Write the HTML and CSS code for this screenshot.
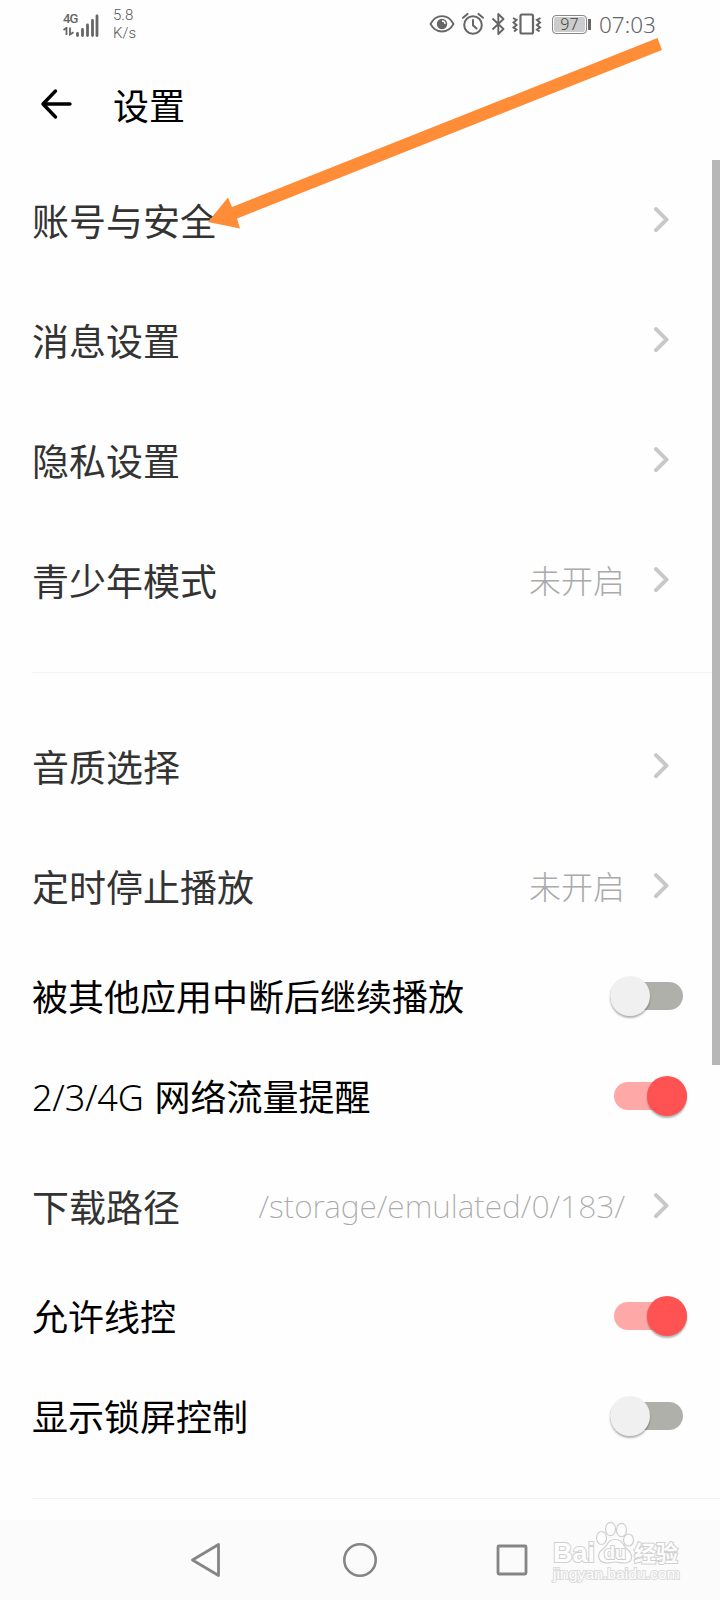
FILE: index.html
```html
<!DOCTYPE html>
<html lang="zh-CN">
<head>
  <meta charset="UTF-8">
  <title>设置</title>
  <link rel="stylesheet" href="styles.css">
</head>
<body>
  <svg class="defs" width="0" height="0">
    <symbol id="chevron" viewBox="0 0 16 28">
      <path d="M3 3.2 L13.5 13.7 L3 24.2" fill="none" stroke="#c8c8c8" stroke-width="4" stroke-linecap="round" stroke-linejoin="round"/>
    </symbol>
  </svg>

  <div class="status-bar">
    <div class="network">
      <span class="network-type">4G</span>
      <svg class="data-icon" width="12" height="9" viewBox="0 0 12 9">
        <path d="M0.5 3 L3.5 0.8 V8 M7 0.5 V7.5 L10.5 5.2" fill="none" stroke="#666" stroke-width="1.8"/>
      </svg>
    </div>
    <svg class="signal" width="24" height="24" viewBox="0 0 24 24">
      <path d="M2.5 20.5 V22.5 M7.5 16.5 V22.5 M12.5 12 V22.5 M17.5 7.5 V22.5 M22 3 V22.5" stroke="#666" stroke-width="2.8" stroke-linecap="round"/>
    </svg>
    <div class="speed"><span>5.8</span><span>K/s</span></div>
    <div class="status-icons">
      <svg width="26" height="20" viewBox="0 0 26 20">
        <path d="M1.5 10 C7 -0.5 19 -0.5 24.5 10 C19 20 7 20 1.5 10 Z" fill="none" stroke="#666" stroke-width="1.8"/>
        <circle cx="13" cy="10" r="5.2" fill="#666"/>
        <path d="M13 7 A3 3 0 0 1 16 10" fill="none" stroke="#fff" stroke-width="1.3"/>
      </svg>
      <svg class="alarm" width="22" height="24" viewBox="0 0 22 24">
        <circle cx="11" cy="13" r="8.8" fill="none" stroke="#666" stroke-width="2"/>
        <path d="M11 8 V13.3 L14.5 16.5 M1 5.8 L5.5 2 M21 5.8 L16.5 2" fill="none" stroke="#666" stroke-width="2" stroke-linecap="round"/>
      </svg>
      <svg class="bluetooth" width="14" height="24" viewBox="0 0 14 24">
        <path d="M1.5 6.5 L12.5 17 L7.3 22 V2 L12.5 7 L1.5 17.5" fill="none" stroke="#666" stroke-width="1.9" stroke-linejoin="round"/>
      </svg>
      <svg class="vibrate" width="30" height="24" viewBox="0 0 30 24">
        <rect x="8.5" y="2.5" width="12.5" height="19" rx="1.5" fill="none" stroke="#666" stroke-width="2.2"/>
        <path d="M1 6 L4.5 8 L1.5 10.5 L4.5 13 L1.5 15.5 L4.5 17.5 L2 19.5 M28.5 6 L25 8 L28 10.5 L25 13 L28 15.5 L25 17.5 L27.5 19.5" fill="none" stroke="#666" stroke-width="2"/>
      </svg>
      <div class="battery">97</div>
      <span class="clock">07:03</span>
    </div>
  </div>

  <div class="header">
    <svg width="32" height="32" viewBox="0 0 32 32">
      <path d="M15.5 3 L3 16 L15.5 29 M3 16 H30" fill="none" stroke="#000" stroke-width="3.4" stroke-linecap="round" stroke-linejoin="round"/>
    </svg>
    <h1>设置</h1>
  </div>

  <div class="settings">
    <div class="group">
      <div class="row">
        <span class="label">账号与安全</span>
        <svg class="chevron"><use href="#chevron"/></svg>
      </div>
      <div class="row">
        <span class="label">消息设置</span>
        <svg class="chevron"><use href="#chevron"/></svg>
      </div>
      <div class="row">
        <span class="label">隐私设置</span>
        <svg class="chevron"><use href="#chevron"/></svg>
      </div>
      <div class="row">
        <span class="label">青少年模式</span>
        <span class="value">未开启</span>
        <svg class="chevron"><use href="#chevron"/></svg>
      </div>
    </div>
    <div class="group">
      <div class="row">
        <span class="label">音质选择</span>
        <svg class="chevron"><use href="#chevron"/></svg>
      </div>
      <div class="row">
        <span class="label">定时停止播放</span>
        <span class="value">未开启</span>
        <svg class="chevron"><use href="#chevron"/></svg>
      </div>
      <div class="row switch-row">
        <span class="label">被其他应用中断后继续播放</span>
        <div class="switch"><div class="knob"></div></div>
      </div>
      <div class="row switch-row">
        <span class="label"><span class="latin">2/3/4G</span>网络流量提醒</span>
        <div class="switch on"><div class="knob"></div></div>
      </div>
      <div class="row">
        <span class="label">下载路径</span>
        <span class="value path">/storage/emulated/0/183/</span>
        <svg class="chevron"><use href="#chevron"/></svg>
      </div>
      <div class="row switch-row">
        <span class="label">允许线控</span>
        <div class="switch on"><div class="knob"></div></div>
      </div>
      <div class="row switch-row">
        <span class="label">显示锁屏控制</span>
        <div class="switch"><div class="knob"></div></div>
      </div>
    </div>
    <div class="scrollbar"></div>
  </div>

  <div class="nav-bar">
    <svg width="36" height="40" viewBox="0 0 36 40">
      <path d="M4.5 20 L30.5 4.5 V35.5 Z" fill="none" stroke="#858585" stroke-width="2.8" stroke-linejoin="round"/>
    </svg>
    <svg width="36" height="40" viewBox="0 0 36 40">
      <circle cx="19" cy="20" r="15.7" fill="none" stroke="#858585" stroke-width="2.6"/>
    </svg>
    <svg width="36" height="40" viewBox="0 0 36 40">
      <rect x="4" y="6" width="28" height="28" rx="1" fill="none" stroke="#858585" stroke-width="2.8"/>
    </svg>
  </div>

  <svg class="arrow" width="720" height="240" viewBox="0 0 720 240">
    <path d="M208 222 L228 197.5 L232 207 L657.5 38 L662 50 L237 218.5 L240 228.5 Z" fill="#ff8c37"/>
  </svg>

  <svg class="watermark" width="140" height="66" viewBox="0 0 140 66">
    <g fill="#fdfdfd" stroke="#d0d0d0" stroke-width="1.2">
      <text class="brand" x="3" y="42" textLength="42" lengthAdjust="spacingAndGlyphs">Bai</text>
      <ellipse cx="51.5" cy="18" rx="5" ry="6.5"/>
      <ellipse cx="60.5" cy="9" rx="5" ry="6.7"/>
      <ellipse cx="71.5" cy="10" rx="5" ry="6.7"/>
      <ellipse cx="78.5" cy="20" rx="5" ry="6"/>
      <path d="M65 19.5 C57 19.5 58 26 53 29 C45 35 49 43 57 43 C62 43 61 42 65 42 C69 42 69 43 74 43 C83 43 84 35 77 29 C72 25 73 19.5 65 19.5 Z"/>
      <text class="paw-text" x="54" y="39">du</text>
      <text class="brand-cn" x="84" y="41">经验</text>
      <text class="site" x="3" y="59" textLength="127" lengthAdjust="spacingAndGlyphs">jingyan.baidu.com</text>
    </g>
  </svg>
</body>
</html>
```
FILE: styles.css
```css
* {
  box-sizing: border-box;
}

body {
  position: relative;
  margin: 0;
  width: 720px;
  height: 1600px;
  overflow: hidden;
  background: #fefefe;
  color: #000;
  font-family: "Noto Sans", "Noto Sans CJK SC", sans-serif;
  display: flex;
  flex-direction: column;
}

svg {
  display: block;
  flex: none;
}

.defs {
  position: absolute;
}

/* status bar */
.status-bar {
  height: 48px;
  padding: 0 65px 0 63px;
  display: flex;
  align-items: center;
  color: #666;
}

.network {
  width: 12px;
  display: flex;
  flex-direction: column;
  gap: 2px;
}

.network-type {
  font: 500 13px/12px "Roboto", sans-serif;
  letter-spacing: -1px;
}

.signal {
  margin-top: 1px;
}

.speed {
  margin-left: 14px;
  width: 40px;
  display: flex;
  flex-direction: column;
  font: 300 15px/18px "Roboto", sans-serif;
  color: #555;
}

.status-icons {
  margin-left: auto;
  display: flex;
  align-items: center;
}

.alarm {
  margin-left: 7px;
}

.bluetooth {
  margin-left: 7px;
}

.vibrate {
  margin-left: 7px;
}

.battery {
  position: relative;
  width: 35px;
  height: 19px;
  margin: 1px 12px 0 10px;
  border: 1.5px solid #888;
  border-radius: 4px;
  background: #ccc;
  box-shadow: inset 0 0 0 1px #fff;
  font: 300 16px/16px "Noto Sans", sans-serif;
  color: #444;
  text-align: center;
}

.battery::after {
  content: "";
  position: absolute;
  right: -5px;
  top: 3px;
  width: 3px;
  height: 11px;
  background: #666;
}

.clock {
  width: 56px;
  padding-top: 1px;
  font-size: 22.5px;
  font-weight: 300;
}

/* title */
.header {
  height: 112px;
  padding: 0 40px;
  display: flex;
  align-items: center;
  gap: 41px;
}

h1 {
  margin: 0;
  font-size: 36px;
  font-weight: 400;
}

/* settings list */
.settings {
  position: relative;
  height: 1360px;
}

.group {
  margin-left: 32px;
  padding-bottom: 32px;
  border-bottom: 1px solid #f2f2f2;
}

.group + .group {
  padding-top: 33px;
}

.row {
  height: 120px;
  padding-right: 51px;
  display: flex;
  align-items: center;
}

.label {
  flex: 1;
  padding-top: 3px;
  font-size: 37px;
  line-height: 50px;
  white-space: nowrap;
  color: #333;
}

.value {
  margin-right: 28px;
  padding-top: 2px;
  font-size: 32px;
  font-weight: 300;
  line-height: 44px;
  color: #aaa;
}

.path {
  padding-top: 0;
  font-size: 31.8px;
  font-weight: 200;
}

.chevron {
  width: 16px;
  height: 28px;
}

.switch-row {
  height: 100px;
  padding-right: 33px;
}

.switch-row .label {
  padding-top: 4px;
  font-size: 36px;
  color: #000;
}

.latin {
  font-weight: 300;
  margin-right: 11px;
  letter-spacing: -0.2px;
}

/* toggle switch */
.switch {
  width: 73px;
  height: 28px;
  margin-right: 4px;
  border-radius: 14px;
  background: #b0b0ab;
  display: flex;
  align-items: center;
}

.knob {
  width: 40px;
  height: 40px;
  flex: none;
  border-radius: 50%;
  background: #f0f0f0;
  box-shadow: 0 2px 2px rgba(0, 0, 0, 0.3);
}

.switch.on {
  margin-right: 0;
  background: #ffa8a8;
  justify-content: flex-end;
}

.switch.on .knob {
  background: #ff5252;
}

.scrollbar {
  position: absolute;
  top: 0;
  right: 0;
  width: 8px;
  height: 905px;
  background: #b7b7b7;
}

/* system navigation */
.nav-bar {
  height: 80px;
  padding: 0 190px 0 188px;
  display: flex;
  align-items: center;
  justify-content: space-between;
  background: #fbfbfb;
}

.arrow {
  position: absolute;
  top: 0;
  left: 0;
}

.watermark {
  position: absolute;
  left: 550px;
  top: 1520px;
}

.watermark text {
  font-family: "Liberation Sans", "Noto Sans CJK SC", sans-serif;
  font-weight: bold;
  paint-order: stroke;
  stroke-width: 2px;
}

.brand {
  font-size: 28px;
}

.paw-text {
  font-size: 18px;
}

.brand-cn {
  font-size: 22px;
}

.watermark .site {
  font-size: 15px;
  font-weight: normal;
  stroke: #dcdcdc;
}
```
